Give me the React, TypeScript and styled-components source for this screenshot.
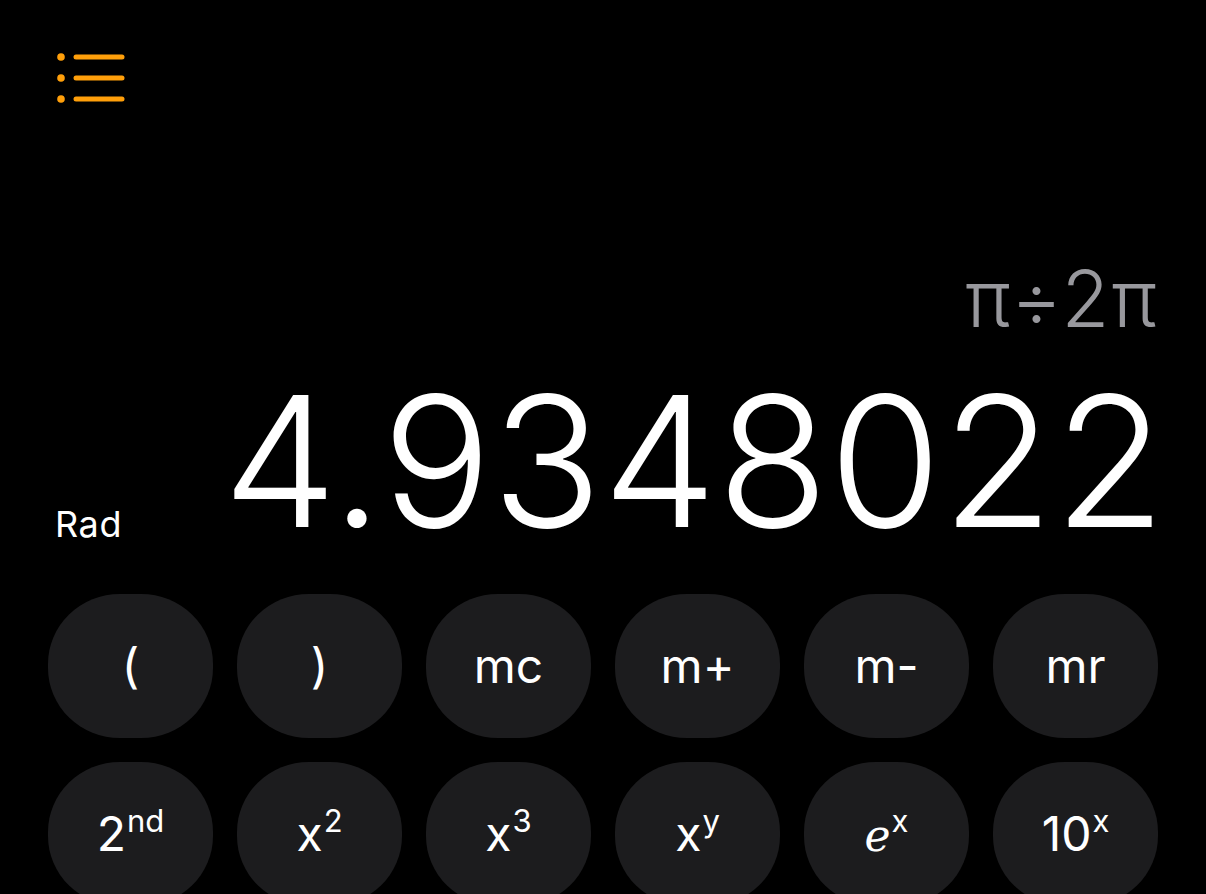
import React from "react";
import styled, { createGlobalStyle } from "styled-components";

const GlobalStyle = createGlobalStyle`
  html, body {
    margin: 0;
    padding: 0;
    background: #000;
  }
  body {
    font-family: Inter, "Noto Sans", "Liberation Sans", sans-serif;
    color: #fff;
    overflow: hidden;
  }
`;

const Page = styled.div`
  width: 1206px;
  height: 894px;
  overflow: hidden;
  background: #000;
  display: flex;
  flex-direction: column;
  padding: 0 48px;
  box-sizing: border-box;
`;

const Header = styled.header`
  display: flex;
  padding-top: 50px;
  padding-left: 8px;
  height: 56px;
`;

const MenuButton = styled.button`
  background: none;
  border: none;
  padding: 0;
  width: 72px;
  height: 56px;
  cursor: pointer;
`;

const Display = styled.section`
  display: flex;
  flex-direction: column;
  align-items: stretch;
  margin-top: 154px;
`;

const Expression = styled.div`
  font-size: 78px;
  line-height: 1;
  font-weight: 350;
  color: #98989d;
  text-align: right;
  letter-spacing: 2px;
  margin-right: -1px;
`;

const ResultRow = styled.div`
  display: flex;
  align-items: flex-end;
  justify-content: space-between;
  margin-top: 32px;
`;

const Mode = styled.span`
  font-size: 36px;
  line-height: 1;
  margin-left: 7px;
  margin-bottom: 10px;
  font-weight: 400;
  letter-spacing: 0.6px;
`;

const Result = styled.div`
  font-size: 182px;
  line-height: 1;
  font-weight: 350;
  letter-spacing: 0.4px;
  margin-right: -8px;
`;

const Keypad = styled.div`
  display: grid;
  grid-template-columns: repeat(6, 165px);
  grid-auto-rows: 144px;
  column-gap: 24px;
  row-gap: 24px;
  margin-top: 42px;
`;

const Key = styled.button`
  border: none;
  background: #1c1c1e;
  color: #fff;
  border-radius: 72px / 70px;
  font-family: Inter, "Noto Sans", "Liberation Sans", sans-serif;
  font-size: 48px;
  font-weight: 400;
  display: flex;
  align-items: center;
  justify-content: center;
  padding: 0;
  line-height: 1;
  cursor: pointer;
`;

const Label = styled.span`
  display: inline-block;
  line-height: 1;
  white-space: nowrap;
`;

const Sup = styled.span`
  font-size: 31px;
  line-height: 0;
  vertical-align: 19px;
  margin-left: 1px;
`;

const ItalicE = styled.span`
  font-family: "DejaVu Serif", "Liberation Serif", serif;
  font-style: italic;
  font-size: 44px;
`;

const MenuIcon = () => (
  <svg width="72" height="56" viewBox="0 0 72 56" fill="none">
    {[7, 28, 49].map((y) => (
      <g key={y}>
        <circle cx="5" cy={y} r="3.8" fill="#ff9f0a" />
        <line x1="20" y1={y} x2="66" y2={y} stroke="#ff9f0a" strokeWidth="5" strokeLinecap="round" />
      </g>
    ))}
  </svg>
);

type KeyDef = { label: React.ReactNode; id: string };

const keys: KeyDef[] = [
  { id: "lp", label: "(" },
  { id: "rp", label: ")" },
  { id: "mc", label: "mc" },
  { id: "mp", label: "m+" },
  { id: "mm", label: "m-" },
  { id: "mr", label: "mr" },
  { id: "2nd", label: <>2<Sup>nd</Sup></> },
  { id: "x2", label: <>x<Sup>2</Sup></> },
  { id: "x3", label: <>x<Sup>3</Sup></> },
  { id: "xy", label: <>x<Sup>y</Sup></> },
  { id: "ex", label: <><ItalicE>e</ItalicE><Sup>x</Sup></> },
  { id: "10x", label: <>10<Sup>x</Sup></> },
];

export default function App() {
  return (
    <>
      <GlobalStyle />
      <Page>
        <Header>
          <MenuButton aria-label="Menu">
            <MenuIcon />
          </MenuButton>
        </Header>
        <Display>
          <Expression>π÷2π</Expression>
          <ResultRow>
            <Mode>Rad</Mode>
            <Result>4.9348022</Result>
          </ResultRow>
        </Display>
        <Keypad>
          {keys.map((k) => (
            <Key key={k.id}>
              <Label>{k.label}</Label>
            </Key>
          ))}
        </Keypad>
      </Page>
    </>
  );
}
